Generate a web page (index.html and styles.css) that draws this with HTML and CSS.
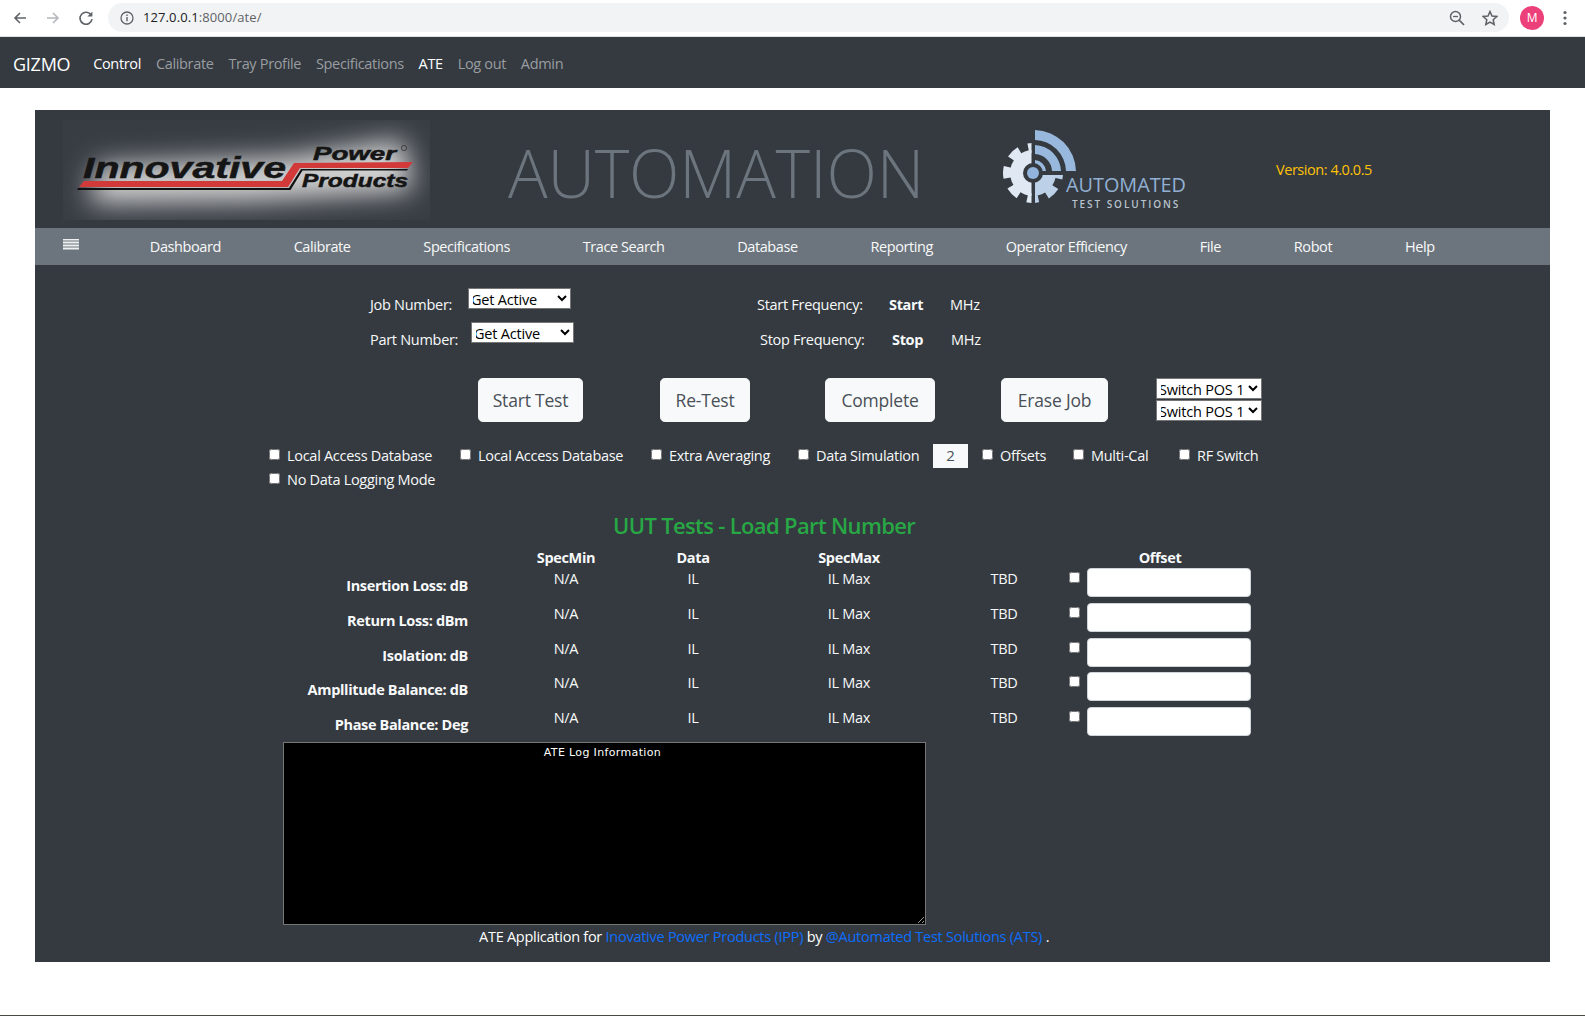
FILE: index.html
```html
<!DOCTYPE html>
<html lang="en">
<head>
    <meta charset="UTF-8">
    <meta name="viewport" content="width=device-width, initial-scale=1.0">
    <title>GIZMO ATE</title>
    <link rel="stylesheet" href="styles.css">
</head>
<body>

    <!-- Browser toolbar -->
    <div class="browser-bar">
        <svg class="tool-icon" viewBox="0 0 16 16"><path d="M14 8H3M8 3 3 8l5 5" fill="none" stroke="#5f6368" stroke-width="1.6"/></svg>
        <svg class="tool-icon" viewBox="0 0 16 16"><path d="M2 8h11M8 3l5 5-5 5" fill="none" stroke="#b4b7bb" stroke-width="1.6"/></svg>
        <svg class="tool-icon" viewBox="0 0 16 16"><path d="M13.2 5.2A6 6 0 1 0 14 9" fill="none" stroke="#5f6368" stroke-width="1.6"/><path d="M14.4 1.6v5h-5z" fill="#5f6368"/></svg>
        <div class="address-pill">
            <svg class="info-icon" viewBox="0 0 14 14"><circle cx="7" cy="7" r="6" fill="none" stroke="#5f6368" stroke-width="1.3"/><path d="M7 6v4.200M7 3.600v1.400" stroke="#5f6368" stroke-width="1.4"/></svg>
            <span class="url"><span class="url-host">127.0.0.1</span>:8000/ate/</span>
            <svg class="pill-icon zoom-icon" viewBox="0 0 16 16"><circle cx="6.500" cy="6.500" r="5" fill="none" stroke="#5f6368" stroke-width="1.500"/><path d="M10.200 10.200 15 15" stroke="#5f6368" stroke-width="1.700"/><path d="M4 6.500h5" stroke="#5f6368" stroke-width="1.300"/></svg>
            <svg class="pill-icon star-icon" viewBox="0 0 16 16"><path d="m8 1.500 2 4.500 4.800.5-3.600 3.200 1 4.800L8 12.100l-4.200 2.400 1-4.800L1.200 6.500 6 6z" fill="none" stroke="#5f6368" stroke-width="1.500"/></svg>
        </div>
        <div class="avatar">M</div>
        <svg class="dots-icon" viewBox="0 0 4 16"><circle cx="2" cy="2.500" r="1.600"/><circle cx="2" cy="8" r="1.600"/><circle cx="2" cy="13.500" r="1.600"/></svg>
    </div>

    <!-- Site navbar -->
    <nav class="navbar">
        <a class="brand">GIZMO</a>
        <a class="nav-link active">Control</a>
        <a class="nav-link">Calibrate</a>
        <a class="nav-link">Tray Profile</a>
        <a class="nav-link">Specifications</a>
        <a class="nav-link active">ATE</a>
        <a class="nav-link">Log out</a>
        <a class="nav-link">Admin</a>
    </nav>

    <main class="panel">

        <!-- Logos and title -->
        <header class="panel-header">
            <svg class="ipp-logo" viewBox="0 0 367 100">
                <defs>
                    <filter id="glow" x="-20%" y="-60%" width="140%" height="220%"><feGaussianBlur stdDeviation="14"/></filter>
                    <clipPath id="logo-box"><rect width="367" height="100"/></clipPath>
                </defs>
                <rect width="367" height="100" fill="#383d44"/>
                <g clip-path="url(#logo-box)">
                    <path d="M34 46 L225 38 L340 20 L350 70 L190 80 L26 82Z" fill="#dcdcdc" filter="url(#glow)"/>
                </g>
                <text class="ipp-big" x="20" y="58" textLength="203" lengthAdjust="spacingAndGlyphs">Innovative</text>
                <text class="ipp-small" x="250" y="40" textLength="83" lengthAdjust="spacingAndGlyphs">Power</text>
                <text class="ipp-small" x="239" y="67" textLength="106" lengthAdjust="spacingAndGlyphs">Products</text>
                <path d="M21 61H219L231 43 350 42 345 48 237 48 225 67 16 67Z" fill="#d13a38"/>
                <path d="M15 68H226L238 49 345 49 344 50.500 239.500 50.500 227.500 70 14 70Z" fill="#111"/>
                <circle cx="341" cy="28" r="2.600" fill="none" stroke="#333" stroke-width=".8"/>
            </svg>
            <h1 class="title">AUTOMATION</h1>
            <svg class="ats-logo" viewBox="0 0 210 95">
                <defs>
                    <clipPath id="gear-left"><rect x="0" y="0" width="40.500" height="95"/></clipPath>
                    <clipPath id="gear-low"><rect x="44" y="55" width="60" height="40"/></clipPath>
                </defs>
                <g clip-path="url(#gear-left)" fill="#dfe8f3" stroke="none">
                    <circle cx="42" cy="53" r="23"/>
                    <circle cx="42" cy="53" r="25" fill="none" stroke="#dfe8f3" stroke-width="10" stroke-dasharray="11 8.630" stroke-dashoffset="5.500"/>
                </g>
                <g clip-path="url(#gear-low)" fill="#bcd0e8" stroke="none">
                    <circle cx="42" cy="53" r="23"/>
                    <circle cx="42" cy="53" r="25" fill="none" stroke="#bcd0e8" stroke-width="10" stroke-dasharray="11 8.630" stroke-dashoffset="5.500"/>
                </g>
                <path d="M44 10A42 42 0 0 1 85 51H75A32 32 0 0 0 44 20Z" fill="#98b8dd"/>
                <path d="M44 25A27 27 0 0 1 70 51H61A18 18 0 0 0 44 34Z" fill="#98b8dd"/>
                <path d="M44 40A12 12 0 0 1 55 51H50A7 7 0 0 0 44 45Z" fill="#98b8dd"/>
                <circle cx="42" cy="53" r="10" fill="#343a40"/>
                <circle cx="42" cy="53" r="6" fill="#92b4dc"/>
                <text class="ats-big" x="75" y="72" textLength="120" lengthAdjust="spacingAndGlyphs">AUTOMATED</text>
                <text class="ats-small" x="81" y="88" textLength="106" lengthAdjust="spacing">TEST SOLUTIONS</text>
            </svg>
            <div class="version">Version: 4.0.0.5</div>
        </header>

        <!-- Application menu -->
        <nav class="menu">
            <svg class="menu-toggle" viewBox="0 0 16 11"><path d="M0 .5h16M0 3.500h16M0 6.500h16M0 9.500h16" stroke="#eef0f2" stroke-width="1.800"/></svg>
            <a>Dashboard</a>
            <a>Calibrate</a>
            <a>Specifications</a>
            <a>Trace Search</a>
            <a>Database</a>
            <a>Reporting</a>
            <a>Operator Efficiency</a>
            <a>File</a>
            <a>Robot</a>
            <a>Help</a>
        </nav>

        <!-- Job details -->
        <section class="job-row job-row-first">
            <label>Job Number:</label>
            <select class="job-select"><option>Get Active</option></select>
            <label>Start Frequency:</label>
            <b>Start</b>
            <span>MHz</span>
        </section>
        <section class="job-row job-row-second">
            <label>Part Number:</label>
            <select class="job-select"><option>Get Active</option></select>
            <label>Stop Frequency:</label>
            <b>Stop</b>
            <span>MHz</span>
        </section>

        <!-- Actions -->
        <section class="action-row">
            <button class="action-btn">Start Test</button>
            <span></span>
            <button class="action-btn">Re-Test</button>
            <span></span>
            <button class="action-btn">Complete</button>
            <span></span>
            <button class="action-btn">Erase Job</button>
            <span></span>
            <div class="switch-stack">
                <select class="switch-select"><option>Switch POS 1</option></select>
                <select class="switch-select"><option>Switch POS 1</option></select>
            </div>
        </section>

        <!-- Options -->
        <section class="option-row">
            <label class="option"><input type="checkbox">Local Access Database</label>
            <label class="option"><input type="checkbox">Local Access Database</label>
            <label class="option"><input type="checkbox">Extra Averaging</label>
            <label class="option"><input type="checkbox">Data Simulation</label>
            <input class="avg-input" type="text" value="2">
            <label class="option"><input type="checkbox">Offsets</label>
            <label class="option"><input type="checkbox">Multi-Cal</label>
            <label class="option"><input type="checkbox">RF Switch</label>
            <label class="option"><input type="checkbox">No Data Logging Mode</label>
        </section>

        <h2 class="uut-title">UUT Tests - Load Part Number</h2>

        <!-- Test results -->
        <section class="uut-grid">
            <span></span><b>SpecMin</b><b>Data</b><b>SpecMax</b><span></span><span></span><b class="offset-head">Offset</b>

            <b class="uut-label">Insertion Loss: dB</b><span>N/A</span><span>IL</span><span>IL Max</span><span>TBD</span><input class="uut-check" type="checkbox"><input class="offset-input" type="text">
            <b class="uut-label">Return Loss: dBm</b><span>N/A</span><span>IL</span><span>IL Max</span><span>TBD</span><input class="uut-check" type="checkbox"><input class="offset-input" type="text">
            <b class="uut-label">Isolation: dB</b><span>N/A</span><span>IL</span><span>IL Max</span><span>TBD</span><input class="uut-check" type="checkbox"><input class="offset-input" type="text">
            <b class="uut-label">Ampllitude Balance: dB</b><span>N/A</span><span>IL</span><span>IL Max</span><span>TBD</span><input class="uut-check" type="checkbox"><input class="offset-input" type="text">
            <b class="uut-label">Phase Balance: Deg</b><span>N/A</span><span>IL</span><span>IL Max</span><span>TBD</span><input class="uut-check" type="checkbox"><input class="offset-input" type="text">
        </section>

        <textarea class="log-box" readonly>ATE Log Information</textarea>

        <p class="credits">ATE Application for <a>Inovative Power Products (IPP)</a> by <a>@Automated Test Solutions (ATS)</a> .</p>
    </main>

    <div class="screen-edge"></div>

</body>
</html>
```

FILE: styles.css
```css
html, body {
    margin: 0;
    padding: 0;
}
body {
    height: 1016px;
    overflow: hidden;
    display: flex;
    flex-direction: column;
    background: #fff;
    color: #f8f9fa;
    font-family: "Open Sans", "Liberation Sans", sans-serif;
    font-size: 14.500px;
    line-height: 22px;
    letter-spacing: -0.29px;
}
b {
    letter-spacing: -0.35px;
}

/* browser toolbar */
.browser-bar {
    flex: none;
    display: flex;
    align-items: center;
    padding: 0 0 1px 12px;
    border-bottom: 1px solid #dfe1e3;
    box-sizing: border-box;
    height: 37px;
}
.tool-icon {
    width: 16px;
    height: 16px;
    margin-right: 17px;
    flex: none;
}
.address-pill {
    margin-left: -3px;
    width: 1401px;
    height: 29px;
    padding-left: 12px;
    box-sizing: border-box;
    border-radius: 15px;
    background: #f1f3f4;
    display: flex;
    align-items: center;
}
.info-icon {
    width: 14px;
    height: 14px;
    margin-right: 9px;
}
.url {
    color: #5f6368;
    font-size: 13px;
    letter-spacing: 0.1px;
    padding-bottom: 2px;
}
.url-host {
    color: #202124;
}
.pill-icon {
    width: 16px;
    height: 16px;
}
.zoom-icon {
    margin-left: auto;
}
.star-icon {
    margin-left: 17px;
    margin-right: 11px;
}
.avatar {
    width: 24px;
    height: 24px;
    margin-left: 11px;
    border-radius: 50%;
    background: #ec407a;
    color: #fff;
    font-size: 12px;
    line-height: 24px;
    text-align: center;
}
.dots-icon {
    width: 4px;
    height: 16px;
    margin-left: 19px;
    fill: #5f6368;
}

/* site navbar */
.navbar {
    height: 51px;
    box-sizing: border-box;
    flex: none;
    background: #343a40;
    display: flex;
    align-items: center;
    padding: 2px 0 0 13px;
    gap: 14.800px;
    letter-spacing: -0.33px;
}
.brand {
    font-size: 18px;
    letter-spacing: -0.25px;
    color: #fff;
    margin-right: 8px;
}
.nav-link {
    color: #9a9da0;
}
.nav-link.active {
    color: #fff;
}

/* main panel */
.panel {
    width: 1515px;
    height: 852px;
    margin: 22px 0 0 35px;
    flex: none;
    background: #343a40;
}
.panel-header {
    height: 118px;
    display: flex;
    align-items: flex-start;
}
.ipp-logo {
    width: 367px;
    height: 100px;
    margin: 10px 0 0 28px;
    flex: none;
}
.ipp-big, .ipp-small {
    font-family: "Liberation Sans", sans-serif;
    font-weight: bold;
    font-style: italic;
    fill: #151515;
    stroke: #151515;
    stroke-width: .5px;
    letter-spacing: 0;
}
.ipp-big {
    font-size: 30px;
}
.ipp-small {
    font-size: 18px;
}
.title {
    margin: 18px 0 0 78px;
    width: 475px;
    font-size: 66px;
    line-height: 88px;
    font-weight: 300;
    color: #6c757d;
    letter-spacing: -0.2px;
}
.ats-logo {
    width: 210px;
    height: 95px;
    margin: 10px 0 0 8px;
    flex: none;
}
.ats-big {
    font-family: "Open Sans", sans-serif;
    font-size: 20px;
    font-weight: 500;
    fill: #93b0d3;
    letter-spacing: 0;
}
.ats-small {
    font-family: "Open Sans", sans-serif;
    font-size: 10px;
    font-weight: 600;
    fill: #b9c2cc;
}
.version {
    margin: 49px 0 0 75px;
    color: #ffc107;
    letter-spacing: -0.45px;
}

/* application menu */
.menu {
    height: 37px;
    box-sizing: border-box;
    padding: 0 0 0 28px;
    background: #6c757d;
    display: flex;
    align-items: center;
    gap: 72.800px;
    color: #f8f9fa;
    letter-spacing: -0.42px;
}
.menu-toggle {
    width: 16px;
    height: 11px;
    margin: -5px -2px 0 0;
}

/* job details */
.job-row {
    display: grid;
    height: 34px;
    padding-left: 335px;
}
.job-row label, .job-row b, .job-row span {
    padding-top: 6px;
}
.job-row-first {
    margin-top: 23px;
    grid-template-columns: 98px 289px 132px 61px auto;
}
.job-row-second {
    height: 56px;
    grid-template-columns: 101px 289px 132px 59px auto;
}
.job-row-second label, .job-row-second b, .job-row-second span {
    padding-top: 7px;
}
.job-select {
    width: 103px;
    height: 21px;
    font-family: inherit;
    font-size: 14.500px;
    letter-spacing: -0.2px;
    padding: 0 0 1px;
    text-indent: -2px;
    background: #fff;
    border: 1px solid #767676;
    border-radius: 0;
}

/* actions */
.action-row {
    display: grid;
    grid-template-columns: 105px 77px 90px 75px 110px 66px 107px 48px 106px;
    height: 44px;
    padding-left: 443px;
}
.action-btn {
    height: 44px;
    padding: 0 0 1px;
    border: 1px solid #f8f9fa;
    border-radius: 4.800px;
    background: #f8f9fa;
    color: #495057;
    font-family: inherit;
    font-size: 17.500px;
    letter-spacing: -0.2px;
}
.switch-stack {
    display: flex;
    flex-direction: column;
    gap: 1px;
}
.switch-select {
    width: 106px;
    height: 21px;
    padding: 0 0 1px;
    font-family: inherit;
    font-size: 14.500px;
    letter-spacing: -0.2px;
    text-indent: -2px;
    background: #fff;
    border: 1px solid #767676;
    border-radius: 0;
}

/* options */
.option-row {
    display: grid;
    grid-template-columns: 191px 191px 147px 135px 49px 91px 106px 90px;
    grid-template-rows: 24px 22px;
    margin-top: 22px;
    padding-left: 234px;
    line-height: 24px;
}
.option {
    display: flex;
    align-items: flex-start;
    white-space: nowrap;
}
.option input {
    width: 11px;
    height: 11px;
    margin: 5px 7px 0 0;
}
.option-row .option:last-child {
    grid-column: 1 / 3;
}
.avg-input {
    width: 35px;
    height: 24px;
    box-sizing: border-box;
    border: 0;
    padding: 0 0 2px;
    background: #f8f9fa;
    color: #495057;
    font-family: inherit;
    font-size: 15px;
    text-align: center;
}

.uut-title {
    margin: 19px 0 0;
    height: 32px;
    padding-left: 578px;
    font-size: 22px;
    line-height: 32px;
    font-weight: 600;
    color: #28a745;
    letter-spacing: -0.65px;
}

/* test results */
.uut-grid {
    display: grid;
    grid-template-columns: 185px 196px 58px 254px 56px 55px 164px;
    grid-template-rows: 21px repeat(5, 34.800px);
    margin: 6px 0 0 248px;
    text-align: center;
}
.uut-grid > b {
    line-height: 21px;
}
.uut-grid > .uut-label {
    padding-top: 7px;
    line-height: 22px;
    text-align: right;
    white-space: nowrap;
}
.offset-head {
    margin-left: -18px;
}
.uut-check {
    width: 11px;
    height: 11px;
    margin: 4px 7px 0 auto;
}
.offset-input {
    width: 164px;
    height: 29px;
    box-sizing: border-box;
    background: #fff;
    border: 1px solid #ced4da;
    border-radius: 4px;
}

.log-box {
    display: block;
    width: 643px;
    height: 183px;
    box-sizing: border-box;
    margin: 0 0 0 248px;
    padding: 2px 6px 2px 2px;
    background: #000;
    color: #fff;
    border: 1px solid #777;
    font-family: "DejaVu Sans", sans-serif;
    font-size: 11px;
    line-height: 16px;
    letter-spacing: 0.35px;
    text-align: center;
    outline: none;
}
.credits {
    margin: 1px 0 0;
    padding-left: 444px;
    color: #fff;
    white-space: nowrap;
    letter-spacing: -0.26px;
}
.credits a {
    color: #0d6efd;
}

.screen-edge {
    height: 1px;
    margin-top: auto;
    background: #4a4a45;
}
```
